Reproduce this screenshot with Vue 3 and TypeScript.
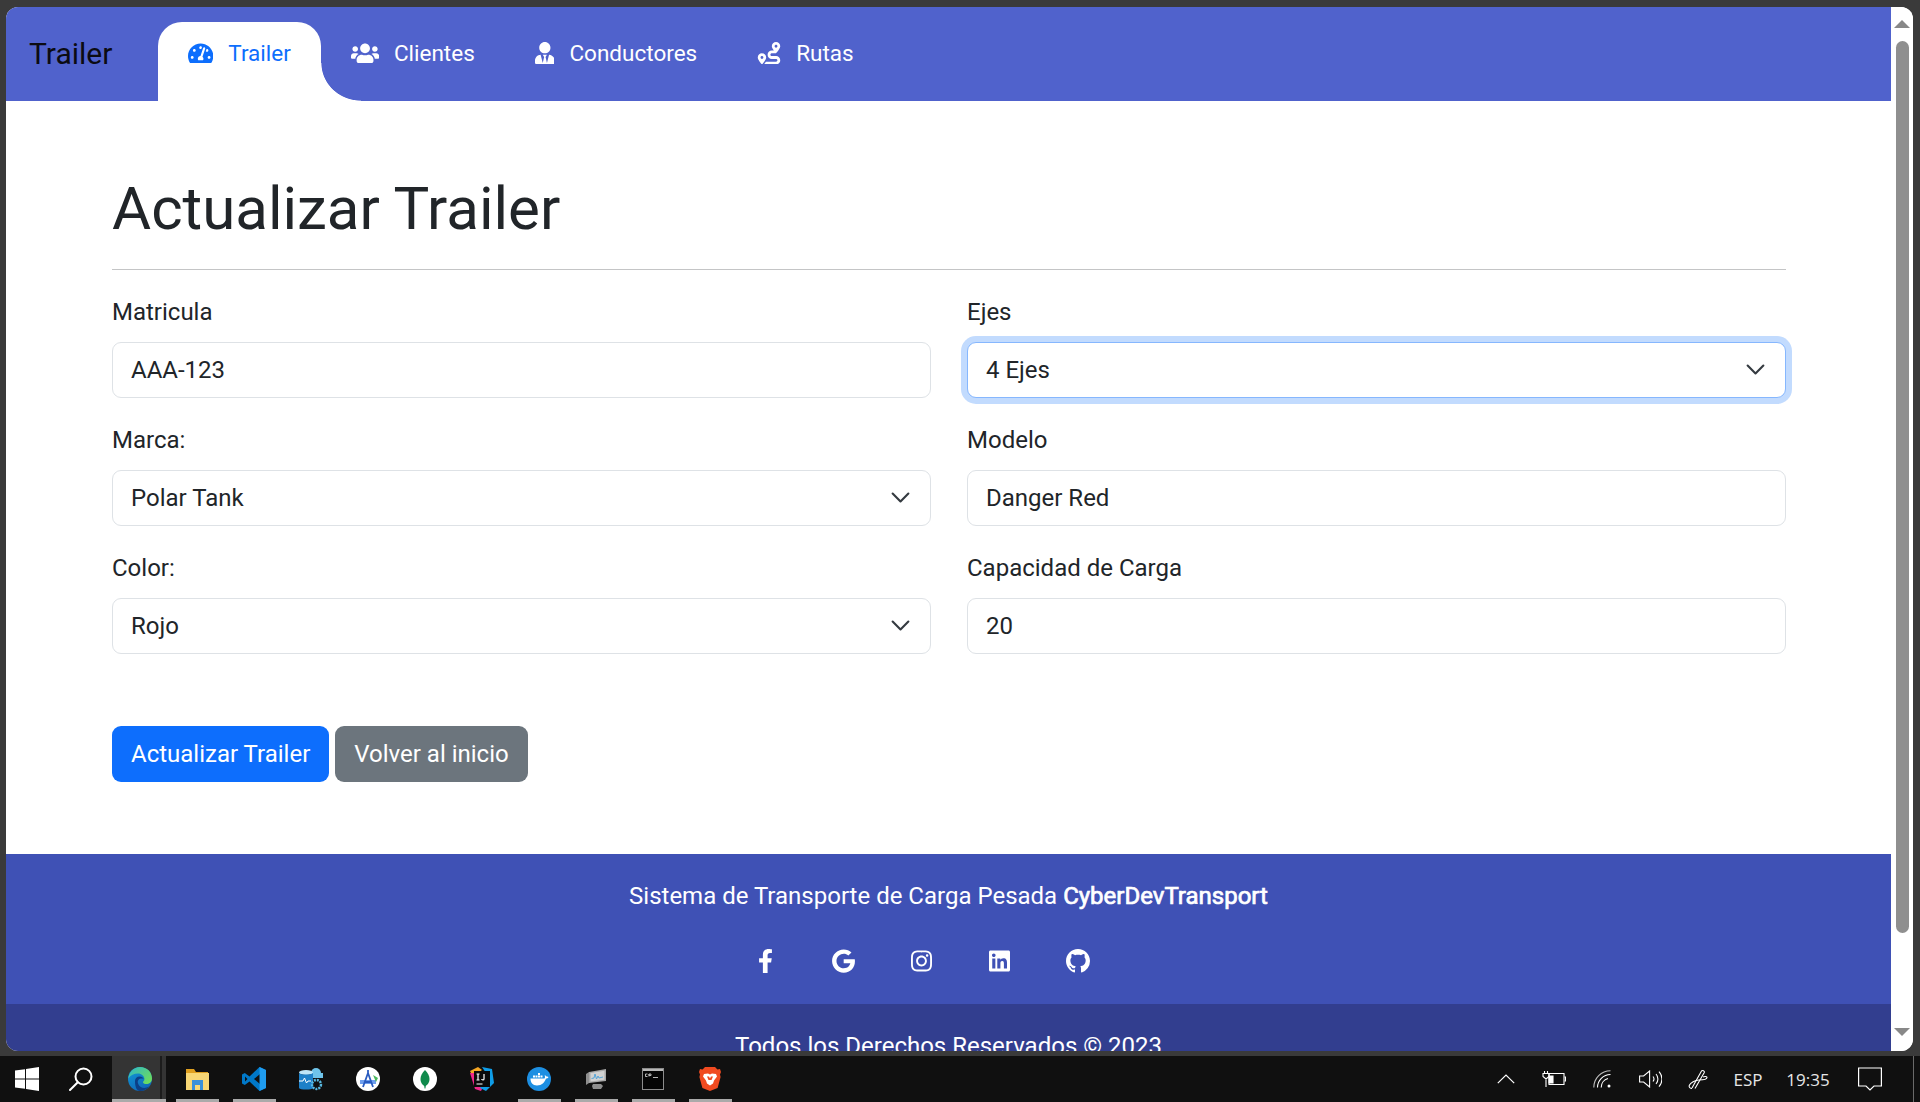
<template>
  <div class="desktop">
    <div class="window">
      <div class="page">
        <nav class="navbar">
          <a class="brand">Trailer</a>
          <ul class="nav-list">
            <li v-for="(link, i) in navLinks" :key="link.label">
              <a class="nav-link" :class="{ active: i === 0 }">
                <svg class="nav-icon" :viewBox="link.box" :style="{ width: link.width + 'px' }">
                  <path :d="link.path" />
                </svg>
                <span>{{ link.label }}</span>
              </a>
            </li>
          </ul>
        </nav>

        <main class="content">
          <h1>Actualizar Trailer</h1>
          <hr />
          <form class="form-grid" @submit.prevent>
            <div v-for="field in fields" :key="field.label" class="field">
              <label>{{ field.label }}</label>
              <div v-if="field.options" class="select-wrap">
                <select class="control" :class="{ focused: field.focused }">
                  <option>{{ field.value }}</option>
                </select>
                <svg class="chevron" viewBox="0 0 16 16">
                  <path d="m2 5 6 6 6-6" />
                </svg>
              </div>
              <input v-else class="control" type="text" :value="field.value" />
            </div>
          </form>
          <div class="actions">
            <button class="btn primary" type="button">Actualizar Trailer</button>
            <button class="btn secondary" type="button">Volver al inicio</button>
          </div>
        </main>

        <footer class="footer">
          <div class="footer-top">
            <p>Sistema de Transporte de Carga Pesada <strong>CyberDevTransport</strong></p>
            <div class="socials">
              <a v-for="s in socials" :key="s.name" class="social" :aria-label="s.name">
                <svg :viewBox="s.box" :style="{ width: s.width + 'px' }"><path :d="s.path" /></svg>
              </a>
            </div>
          </div>
          <div class="footer-bottom">Todos los Derechos Reservados © 2023</div>
        </footer>
      </div>

      <div class="scrollbar">
        <span class="arrow up"></span>
        <span class="thumb"></span>
        <span class="arrow down"></span>
      </div>
    </div>

    <div class="taskbar">
      <div class="apps">
        <div class="start-cell">
          <svg width="24" height="24" viewBox="0 0 24 24">
            <path fill="#fff" d="M0 3.6 10 2.2v9.2H0zM11 2 24 0v11.4H11zM0 12.6h10v9.2L0 20.4zM11 12.6h13V24l-13-2z" />
          </svg>
        </div>
        <div class="start-cell">
          <svg width="24" height="24" viewBox="0 0 24 24" fill="none" stroke="#fff" stroke-width="2">
            <circle cx="14.5" cy="9.5" r="8" />
            <path d="M8.8 15.2 1 23" stroke-linecap="round" />
          </svg>
        </div>

        <div class="app active">
          <svg width="24" height="24" viewBox="0 0 24 24">
            <defs>
              <linearGradient id="edgeBlue" x1="0" y1="0" x2="0.6" y2="1">
                <stop offset="0" stop-color="#0f9ad8" />
                <stop offset="1" stop-color="#1168b8" />
              </linearGradient>
              <linearGradient id="edgeGreen" x1="0" y1="0" x2="1" y2="0.7">
                <stop offset="0" stop-color="#2fb6c8" />
                <stop offset="1" stop-color="#6bdc5f" />
              </linearGradient>
            </defs>
            <circle cx="12" cy="12" r="12" fill="url(#edgeBlue)" />
            <path fill="url(#edgeGreen)" d="M12 0c7 0 12 5.2 12 11.4 0 3.6-2.8 5.6-5.6 5.6-2 0-3.4-.8-3.4-1.8 0-1 1.4-1.2 1.4-3.2C16.400 9 13.500 6.500 10 6.500 6 6.500 2.500 8.400.4 11.400 1 5 5.800 0 12 0Z" />
            <path fill="#0c3f86" d="M7 14c0-2.600 2-4.500 4.600-4.500 2 0 3.600 1.100 4 2.500-1-.5-3.600-.7-5 .7-1.600 1.600-.8 5 1.800 7 2.600 1.800 6 1.500 8.600-.2C18.800 22.300 15.600 24 12 24c-3 0-5-3.600-5-10Z" />
          </svg>
        </div>
        <div class="app running">
          <svg width="24" height="22" viewBox="0 0 24 22">
            <path fill="#e0a020" d="M1 1h8l2 3h12v4H1z" />
            <path fill="#f8d775" d="M1 5h23v17H1z" />
            <path fill="#3a90d8" d="M7 12h11v10h-3v-5h-5v5H7z" />
          </svg>
        </div>
        <div class="app running">
          <svg width="24" height="24" viewBox="0 0 24 24">
            <path fill="#0078c8" d="M17.500 0 24 3v18l-6.500 3-10-9.500L2.800 18 0 16.500v-9L2.800 6l4.700 3.500zM18 7l-6 5 6 5zM3 9.500v5l2.500-2.500z" />
            <path fill="#1f9cf0" d="M17.500 0 24 3v18l-6.500 3z" />
          </svg>
        </div>
        <div class="app">
          <svg width="26" height="24" viewBox="0 0 26 24">
            <circle cx="18" cy="6" r="5" fill="#6fc4ea" />
            <path fill="#6fc4ea" d="M13 6h12v5H13z" />
            <ellipse cx="8" cy="5.500" rx="7" ry="2.500" fill="#bfe6f7" />
            <path fill="#1d80c8" d="M1 6c2 2 12 2 14 0v15c-1 2-13 2-14 0z" />
            <path fill="none" stroke="#fff" stroke-width="1" d="M1 14h4l1.500-3 2 5 1.500-2h3" />
            <circle cx="18.500" cy="17.500" r="4.500" fill="none" stroke="#58b8e0" stroke-width="2.400" stroke-dasharray="2 1" />
          </svg>
        </div>
        <div class="app">
          <svg width="24" height="24" viewBox="0 0 24 24">
            <circle cx="12" cy="12" r="12" fill="#fff" />
            <path fill="#3f7fe8" d="M4 13h16v4H4z" opacity=".75" />
            <path fill="#4ab85c" d="M17 8l5 3-2 4z" />
            <path fill="none" stroke="#2a5cc0" stroke-width="1.800" d="M12 3v3M12 6 7 20M12 6l5 14M9 15h6" />
          </svg>
        </div>
        <div class="app">
          <svg width="24" height="24" viewBox="0 0 24 24">
            <circle cx="12" cy="12" r="12" fill="#fff" />
            <path fill="#0f8a4c" d="M12 3c3 3 4.500 6 4.500 9 0 4-2.500 6-3.700 7l-.4 2.500h-.8l-.4-2.500c-1.200-1-3.700-3-3.700-7 0-3 1.500-6 4.500-9Z" />
          </svg>
        </div>
        <div class="app">
          <svg width="24" height="24" viewBox="0 0 24 24">
            <path fill="#f5a623" d="M0 4 8 0l4 3-9 7z" />
            <path fill="#f0288a" d="M0 6l5 16 6 2 3-6-8-12z" />
            <path fill="#0f9de8" d="M12 0l10 2 2 14-8 8-6-3 8-12z" />
            <rect x="4" y="4" width="16" height="16" fill="#0a0a0a" />
            <path stroke="#fff" stroke-width="1.200" fill="none" d="M6.500 7h3M8 7v6M6.500 13h3M14 7v5c0 1.200-2.200 1.200-2.400 0M6.500 17h6" />
          </svg>
        </div>
        <div class="app running">
          <svg width="24" height="24" viewBox="0 0 24 24">
            <circle cx="12" cy="12" r="12" fill="#1d8fe2" />
            <path fill="#fff" d="M3.500 11.500h14c.8-.6.600-2.400 0-3 .9-.2 1.700.3 2 1 1-.2 1.600.1 2 .5-.5 1.200-1.500 1.500-2.500 1.500C17.500 15.500 15 18.500 10 18.500c-4.500 0-6.500-3-6.500-7Z" />
            <path fill="#fff" d="M6 8.500h2v2H6zM8.500 8.500h2v2h-2zM11 8.500h2v2h-2zM11 6h2v2h-2zM13.500 8.500h2v2h-2z" />
          </svg>
        </div>
        <div class="app running">
          <svg width="22" height="22" viewBox="0 0 22 22">
            <path fill="#a8a8a8" d="M4 4 21 1v12L4 15z" />
            <path fill="#d2d2d2" d="M5.500 5 19.500 2.800v9L5.500 13.600z" />
            <path fill="none" stroke="#4aa0d8" stroke-width=".9" d="M6.500 10.500 9 10l1-4 1.500 5 1.500-3 1 2 4-1" />
            <path fill="#8e8e8e" d="M1 6l3-2v11l-3 2zM8 16h8l2 2-2 3H8l-1-3z" />
          </svg>
        </div>
        <div class="app running">
          <svg width="22" height="22" viewBox="0 0 22 22">
            <rect x=".5" y=".5" width="21" height="21" fill="#050505" stroke="#8c8c8c" />
            <path fill="#b8b8b8" d="M1 1h20v2H1z" />
            <path fill="none" stroke="#c8c8c8" stroke-width=".9" d="M3.500 6h2M3.500 6v2.500h2M7 6h2v1.500H7zM7 8.500V6M11 9.500h5" />
          </svg>
        </div>
        <div class="app running">
          <svg width="22" height="24" viewBox="0 0 22 24">
            <path fill="#f04a20" d="M6 0h10l2.500 2.500L21 2l1 3-1 2.500.6 2.500-3 11L11 24l-7.600-3-3-11L1 7.500 0 5l1-3 2.500.5z" />
            <path fill="#fff" d="M5 7l4-.6 2 1 2-1 4 .6 1 2.400-3 4-1 3-3 2-3-2-1-3-3-4z" />
            <path fill="#f04a20" d="M8 9.500h2l1 2 1-2h2l-1.500 3.500h-3z" />
          </svg>
        </div>
      </div>

      <div class="tray">
        <div class="tray-icon">
          <svg width="18" height="10" viewBox="0 0 18 10" fill="none" stroke="#fff" stroke-width="1.200"><path d="M.8 9.200 9 1l8.200 8.200" /></svg>
        </div>
        <div class="tray-icon">
          <svg width="24" height="16" viewBox="0 0 24 16" fill="none" stroke="#fff" stroke-width="1.100">
            <path d="M7 2.500h15v11H7z" />
            <path d="M22.500 6h1v4h-1" />
            <path fill="#fff" d="M7 5h4v7H7z" />
            <path d="M1 2.500h6v3L4 8 1 5.500zM2.500 0v2.500M5.500 0v2.500M4 8v8" />
          </svg>
        </div>
        <div class="tray-icon">
          <svg width="18" height="18" viewBox="0 0 18 18" fill="none" stroke="#bdbdbd" stroke-width="1.100">
            <path d="M.8 17.500A16.700 16.700 0 0 1 17.500.8" />
            <path d="M4.500 17.500A13 13 0 0 1 17.500 4.500" stroke="#fff" />
            <path d="M8.200 17.500A9.300 9.300 0 0 1 15 8.500" stroke="#fff" />
            <circle cx="16" cy="16" r="1.500" fill="#fff" stroke="none" />
          </svg>
        </div>
        <div class="tray-icon">
          <svg width="23" height="18" viewBox="0 0 23 18" fill="none" stroke="#fff" stroke-width="1.100">
            <path d="M.6 6v6h4l6 5V1l-6 5z" />
            <path d="M14 6.500a4 4 0 0 1 0 5M17 4a7.500 7.500 0 0 1 0 10M20 1.500a11 11 0 0 1 0 15" />
          </svg>
        </div>
        <div class="tray-icon">
          <svg width="20" height="20" viewBox="0 0 20 20" fill="none" stroke="#fff" stroke-width="1.100">
            <path d="M4 19.500c-2 0-3.500-1.500-2.500-3.500S7 11 11 11c4 0 8-1 8-2.500 0-1-2-1.500-4-.5" />
            <path d="M4 19 13.500 2c.7-1.200 3.500.2 2.800 1.500L7 19.500" />
          </svg>
        </div>
        <div class="tray-text lang">ESP</div>
        <div class="tray-text clock">19:35</div>
        <div class="tray-icon notif">
          <svg width="24" height="24" viewBox="0 0 24 24" fill="none" stroke="#fff" stroke-width="1.200">
            <path d="M.6 1h22.800v18H16l-4 4-4-4H.6z" />
          </svg>
        </div>
      </div>
      <span class="edge-line"></span>
    </div>
  </div>
</template>

<script setup lang="ts">
type NavLink = {
  label: string
  box: string
  width: number
  path: string
}

type Field = {
  label: string
  value: string
  options?: boolean
  focused?: boolean
}

type Social = {
  name: string
  box: string
  width: number
  path: string
}

const navLinks: NavLink[] = [
  {
    label: 'Trailer',
    box: '0 0 576 512',
    width: 25.3,
    path: 'M288 32C128.94 32 0 160.94 0 320c0 52.8 14.25 102.26 39.06 144.8 5.61 9.62 16.3 15.2 27.44 15.2h443c11.14 0 21.83-5.58 27.44-15.2C561.75 422.26 576 372.8 576 320c0-159.06-128.94-288-288-288zm0 64c14.71 0 26.58 10.13 30.32 23.65-1.11 2.26-2.64 4.23-3.45 6.67l-9.22 27.67c-5.13 3.49-10.97 6.01-17.64 6.01-17.67 0-32-14.33-32-32S270.33 96 288 96zM96 384c-17.67 0-32-14.33-32-32s14.33-32 32-32 32 14.33 32 32-14.33 32-32 32zm48-160c-17.67 0-32-14.33-32-32s14.33-32 32-32 32 14.33 32 32-14.33 32-32 32zm246.77-72.41l-61.33 184C343.13 347.33 352 364.54 352 384c0 11.72-3.38 22.55-8.88 32H232.88c-5.5-9.45-8.88-20.28-8.88-32 0-33.94 26.5-61.43 59.9-63.59l61.34-184.01c4.17-12.56 17.73-19.45 30.36-15.17 12.57 4.19 19.35 17.77 15.17 30.36zm14.66 57.2l15.52-46.55c3.47-1.29 7.13-2.23 11.05-2.23 17.67 0 32 14.33 32 32s-14.33 32-32 32c-11.38-.01-20.89-6.27-26.57-15.22zM480 384c-17.67 0-32-14.33-32-32s14.33-32 32-32 32 14.33 32 32-14.33 32-32 32z',
  },
  {
    label: 'Clientes',
    box: '0 0 640 512',
    width: 28.1,
    path: 'M96 224c35.3 0 64-28.7 64-64s-28.7-64-64-64-64 28.7-64 64 28.7 64 64 64zm448 0c35.3 0 64-28.7 64-64s-28.7-64-64-64-64 28.7-64 64 28.7 64 64 64zm32 32h-64c-17.6 0-33.5 7.1-45.1 18.6 40.3 22.1 68.9 62 75.1 109.4h66c17.7 0 32-14.3 32-32v-32c0-35.3-28.7-64-64-64zm-256 0c61.9 0 112-50.1 112-112S381.9 32 320 32 208 82.1 208 144s50.1 112 112 112zm76.8 32h-8.3c-20.8 10-43.9 16-68.5 16s-47.6-6-68.5-16h-8.3C179.6 288 128 339.6 128 403.2V432c0 26.5 21.5 48 48 48h288c26.5 0 48-21.5 48-48v-28.8c0-63.6-51.6-115.2-115.2-115.2zm-223.7-13.4C161.5 263.1 145.6 256 128 256H64c-35.3 0-64 28.7-64 64v32c0 17.7 14.3 32 32 32h65.9c6.3-47.4 34.9-87.3 75.2-109.4z',
  },
  {
    label: 'Conductores',
    box: '0 0 448 512',
    width: 19.7,
    path: 'M224 256c70.7 0 128-57.3 128-128S294.7 0 224 0 96 57.3 96 128s57.3 128 128 128zm95.8 32.6L272 480l-32-136 32-56h-96l32 56-32 136-47.8-191.4C56.9 292 0 350.3 0 422.4V464c0 26.5 21.5 48 48 48h352c26.5 0 48-21.5 48-48v-41.6c0-72.1-56.9-130.4-128.2-133.8z',
  },
  {
    label: 'Rutas',
    box: '0 0 512 512',
    width: 24,
    path: 'M416 320h-96c-17.6 0-32-14.4-32-32s14.4-32 32-32h96s96-107 96-160-43-96-96-96-96 43-96 96c0 25.5 22.2 63.4 45.3 96H320c-52.9 0-96 43.1-96 96s43.1 96 96 96h96c17.6 0 32 14.4 32 32s-14.4 32-32 32H185.5c-16 24.8-33.8 47.7-47.3 64H416c52.9 0 96-43.1 96-96s-43.1-96-96-96zm0-256c17.7 0 32 14.3 32 32s-14.3 32-32 32-32-14.3-32-32 14.3-32 32-32zM96 256c-53 0-96 43-96 96s96 160 96 160 96-107 96-160-43-96-96-96zm0 128c-17.7 0-32-14.3-32-32s14.3-32 32-32 32 14.3 32 32-14.3 32-32 32z',
  },
]

const fields: Field[] = [
  { label: 'Matricula', value: 'AAA-123' },
  { label: 'Ejes', value: '4 Ejes', options: true, focused: true },
  { label: 'Marca:', value: 'Polar Tank', options: true },
  { label: 'Modelo', value: 'Danger Red' },
  { label: 'Color:', value: 'Rojo', options: true },
  { label: 'Capacidad de Carga', value: '20' },
]

const socials: Social[] = [
  {
    name: 'Facebook',
    box: '0 0 320 512',
    width: 15,
    path: 'M279.14 288l14.22-92.66h-88.91v-60.13c0-25.35 12.42-50.06 52.24-50.06h40.42V6.26S260.43 0 225.36 0c-73.22 0-121.08 44.38-121.08 124.72v70.62H22.89V288h81.39v224h100.17V288z',
  },
  {
    name: 'Google',
    box: '0 0 488 512',
    width: 23,
    path: 'M488 261.8C488 403.3 391.1 504 248 504 110.8 504 0 393.2 0 256S110.8 8 248 8c66.8 0 123 24.5 166.3 64.9l-67.5 64.9C258.5 52.6 94.3 116.6 94.3 256c0 86.5 69.1 156.6 153.7 156.6 98.2 0 135-70.4 140.8-106.9H248v-85.3h236.1c2.3 12.7 3.9 24.9 3.9 41.4z',
  },
  {
    name: 'Instagram',
    box: '0 0 448 512',
    width: 21,
    path: 'M224.1 141c-63.6 0-114.9 51.3-114.9 114.9s51.3 114.9 114.9 114.9S339 319.5 339 255.9 287.7 141 224.1 141zm0 189.6c-41.1 0-74.7-33.5-74.7-74.7s33.5-74.7 74.7-74.7 74.7 33.5 74.7 74.7-33.6 74.7-74.7 74.7zm146.4-194.3c0 14.9-12 26.8-26.8 26.8-14.9 0-26.8-12-26.8-26.8s12-26.8 26.8-26.8 26.8 12 26.8 26.8zm76.1 27.2c-1.7-35.9-9.9-67.7-36.2-93.9-26.2-26.2-58-34.4-93.9-36.2-37-2.1-147.9-2.1-184.9 0-35.8 1.7-67.6 9.9-93.9 36.1s-34.4 58-36.2 93.9c-2.1 37-2.1 147.9 0 184.9 1.7 35.9 9.9 67.7 36.2 93.9s58 34.4 93.9 36.2c37 2.1 147.9 2.1 184.9 0 35.9-1.7 67.7-9.9 93.9-36.2 26.2-26.2 34.4-58 36.2-93.9 2.1-37 2.1-147.8 0-184.8zM398.8 388c-7.8 19.6-22.9 34.7-42.6 42.6-29.5 11.7-99.5 9-132.1 9s-102.7 2.6-132.1-9c-19.6-7.8-34.7-22.9-42.6-42.6-11.7-29.5-9-99.5-9-132.1s-2.6-102.7 9-132.1c7.8-19.6 22.9-34.7 42.6-42.6 29.5-11.7 99.5-9 132.1-9s102.7-2.6 132.1 9c19.6 7.8 34.7 22.9 42.6 42.6 11.7 29.5 9 99.5 9 132.1s2.7 102.7-9 132.1z',
  },
  {
    name: 'LinkedIn',
    box: '0 0 448 512',
    width: 21,
    path: 'M416 32H31.9C14.3 32 0 46.5 0 64.3v383.4C0 465.5 14.3 480 31.9 480H416c17.6 0 32-14.5 32-32.3V64.3c0-17.8-14.4-32.3-32-32.3zM135.4 416H69V202.2h66.5V416zm-33.2-243c-21.3 0-38.5-17.3-38.5-38.5S80.9 96 102.2 96c21.2 0 38.5 17.3 38.5 38.5 0 21.3-17.2 38.5-38.5 38.5zm282.1 243h-66.4V312c0-24.8-.5-56.7-34.5-56.7-34.6 0-39.9 27-39.9 54.9V416h-66.4V202.2h63.7v29.2h.9c8.9-16.8 30.6-34.5 62.9-34.5 67.2 0 79.7 44.3 79.7 101.9V416z',
  },
  {
    name: 'GitHub',
    box: '0 0 16 16',
    width: 24,
    path: 'M8 0C3.58 0 0 3.58 0 8c0 3.54 2.29 6.53 5.47 7.59.4.07.55-.17.55-.38 0-.19-.01-.82-.01-1.49-2.01.37-2.53-.49-2.69-.94-.09-.23-.48-.94-.82-1.13-.28-.15-.68-.52-.01-.53.63-.01 1.08.58 1.23.82.72 1.21 1.87.87 2.33.66.07-.52.28-.87.51-1.07-1.78-.2-3.64-.89-3.64-3.95 0-.87.31-1.59.82-2.15-.08-.2-.36-1.02.08-2.12 0 0 .67-.21 2.2.82.64-.18 1.32-.27 2-.27s1.36.09 2 .27c1.53-1.04 2.2-.82 2.2-.82.44 1.1.16 1.92.08 2.12.51.56.82 1.27.82 2.15 0 3.07-1.87 3.75-3.65 3.95.29.25.54.73.54 1.48 0 1.07-.01 1.93-.01 2.2 0 .21.15.46.55.38A8.01 8.01 0 0 0 16 8c0-4.42-3.58-8-8-8z',
  },
]
</script>

<style>
html,
body {
  margin: 0;
  overflow: hidden;
}
</style>

<style scoped>
.desktop {
  display: flex;
  flex-direction: column;
  width: 1920px;
  height: 1102px;
  overflow: hidden;
  background: #3a3a3a;
  font-family: Roboto, 'Liberation Sans', sans-serif;
  color: #212529;
}

.window {
  display: flex;
  height: 1044px;
  margin: 7px 7px 5px 6px;
  border-radius: 12px;
  overflow: hidden;
  background: #fff;
}

.page {
  flex: 1;
  min-width: 0;
  overflow: hidden;
}

/* NAV */
.navbar {
  display: flex;
  box-sizing: border-box;
  height: 94px;
  padding: 15px 0 0 23px;
  background: #5062cc;
}

.brand {
  width: 82px;
  margin-right: 47px;
  padding-top: 9px;
  color: #0b0b12;
  font-size: 30px;
  line-height: 45px;
}

.nav-list {
  display: flex;
  margin: 0;
  padding: 0;
  list-style: none;
}

.nav-link {
  position: relative;
  display: flex;
  align-items: center;
  gap: 15px;
  box-sizing: border-box;
  height: 79px;
  padding: 14px 30px 31px;
  color: #fff;
  font-size: 22.5px;
  line-height: 34px;
}

.nav-link.active {
  border-radius: 24px 24px 0 0;
  background: #fff;
  color: #0d6efd;
}

.nav-link.active::after {
  content: '';
  position: absolute;
  left: 100%;
  bottom: 0;
  width: 40px;
  height: 38px;
  background: radial-gradient(40px 38px at 100% 0, transparent 98%, #fff 100%);
}

.nav-icon {
  flex-shrink: 0;
  height: 22.5px;
  fill: currentColor;
}

/* FORM */
.content {
  box-sizing: border-box;
  height: 753px;
  padding: 72px 105px 0 106px;
}

h1 {
  margin: 0 0 24px;
  font-size: 60px;
  font-weight: 400;
  line-height: 72px;
}

hr {
  height: 1px;
  margin: 0 0 24px;
  border: 0;
  background: #c4c5c6;
}

.form-grid {
  display: grid;
  grid-template-columns: 1fr 1fr;
  gap: 24px 36px;
}

label {
  display: block;
  margin-bottom: 12px;
  font-size: 24px;
  line-height: 36px;
}

.select-wrap {
  position: relative;
}

.control {
  display: block;
  box-sizing: border-box;
  width: 100%;
  height: 56px;
  padding: 0 18px;
  border: 1px solid #dee2e6;
  border-radius: 9px;
  outline: none;
  appearance: none;
  background: #fff;
  color: #212529;
  font-family: inherit;
  font-size: 24px;
}

.control.focused {
  border-color: #86b7fe;
  box-shadow: 0 0 0 6px rgba(13, 110, 253, 0.25);
}

.chevron {
  position: absolute;
  top: 17px;
  right: 20px;
  width: 21px;
  height: 21px;
  fill: none;
  stroke: #343a40;
  stroke-width: 1.6;
  stroke-linecap: round;
  stroke-linejoin: round;
  pointer-events: none;
}

.actions {
  display: flex;
  gap: 6px;
  margin-top: 72px;
}

.btn {
  box-sizing: border-box;
  height: 56px;
  padding: 0 18px;
  border: 1px solid transparent;
  border-radius: 9px;
  color: #fff;
  font-family: inherit;
  font-size: 24px;
}

.primary {
  background: #0d6efd;
}

.secondary {
  background: #6c757d;
}

/* FOOTER */
.footer {
  color: #fff;
  text-align: center;
}

.footer-top {
  box-sizing: border-box;
  height: 150px;
  padding-top: 24px;
  background: #3f51b5;
}

.footer-top p {
  margin: 0 0 33px;
  font-size: 24px;
  line-height: 36px;
}

.footer-top strong {
  font-weight: 400;
  -webkit-text-stroke: 0.7px #fff;
}

.socials {
  display: flex;
  justify-content: center;
}

.social {
  display: flex;
  justify-content: center;
  width: 24px;
  height: 28px;
  margin-right: 54px;
}

.social svg {
  height: 24px;
  margin-top: 2px;
  fill: #fff;
}

.footer-bottom {
  height: 100px;
  padding-top: 24px;
  background: #323e8f;
  font-size: 24px;
  line-height: 36px;
}

/* SCROLLBAR */
.scrollbar {
  display: flex;
  flex-direction: column;
  align-items: center;
  flex: 0 0 22px;
  padding-top: 13px;
  box-sizing: border-box;
  background: #fff;
}

.arrow {
  width: 0;
  height: 0;
  border-right: 8px solid transparent;
  border-left: 8px solid transparent;
}

.arrow.up {
  border-bottom: 8px solid #888;
}

.arrow.down {
  margin-top: 95px;
  border-top: 8px solid #888;
}

.thumb {
  width: 13px;
  height: 892px;
  margin-top: 13px;
  border-radius: 7px;
  background: #8f8f8f;
}

/* TASKBAR */
.taskbar {
  display: flex;
  position: relative;
  justify-content: space-between;
  height: 46px;
  background: #101010;
}

.apps,
.tray {
  display: flex;
  align-items: stretch;
}

.start-cell {
  display: flex;
  align-items: center;
  justify-content: center;
  width: 54px;
}

.app {
  display: flex;
  position: relative;
  align-items: center;
  justify-content: center;
  width: 57px;
}

.app svg {
  margin-left: -2px;
}

.apps .start-cell:nth-child(2) {
  margin-right: 4px;
}

.app.active {
  background: linear-gradient(90deg, #343434 0 48px, #1c1c1c 48px 50px, #343434 50px 54px, transparent 54px);
}

.app.active::after,
.app.running::after {
  content: '';
  position: absolute;
  bottom: 0;
  left: 7px;
  width: 43px;
  height: 3px;
  background: #aaa;
}

.app.active::after {
  left: 0;
  width: 54px;
}

.tray {
  margin-right: 22px;
}

.tray-icon {
  display: flex;
  align-items: center;
  justify-content: center;
  width: 48px;
}

.tray-text {
  display: flex;
  align-items: center;
  justify-content: center;
  color: #e6e6e6;
  font-family: 'Open Sans', 'Noto Sans', sans-serif;
  font-size: 17px;
}

.lang {
  width: 52px;
}

.clock {
  width: 68px;
}

.tray-icon.notif {
  width: 56px;
}

.edge-line {
  position: absolute;
  top: 0;
  right: 6px;
  bottom: 0;
  width: 1px;
  background: #6a6a6a;
}
</style>
